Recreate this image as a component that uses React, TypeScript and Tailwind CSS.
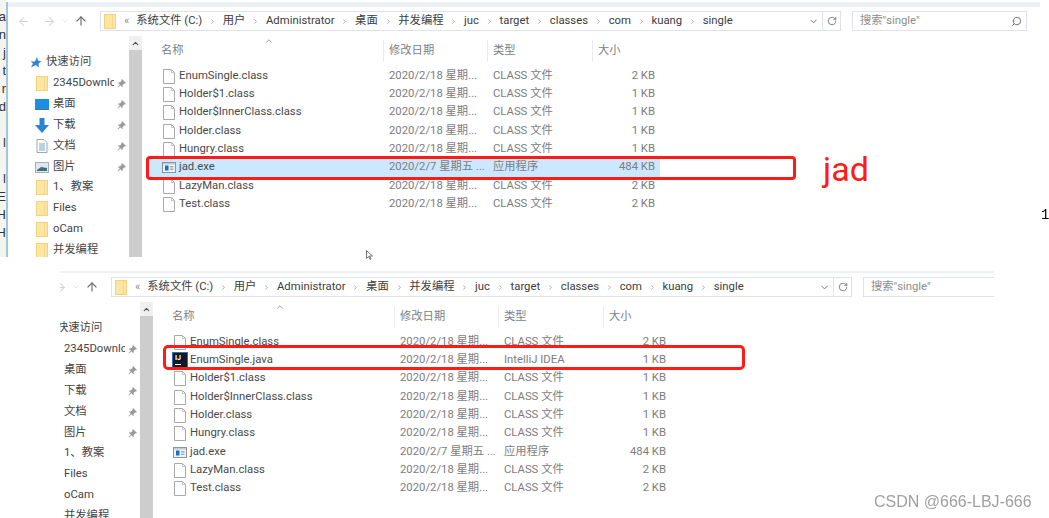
import { ChevronDown, ChevronRight, ChevronUp, ArrowLeft, ArrowRight, ArrowUp, RotateCw, Search } from "lucide-react";

type FileRow = {
  name: string;
  date: string;
  kind: string;
  size: string;
  icon?: "file" | "exe" | "idea";
  selected?: boolean;
};

const D = "2020/2/18 星期...";
const EXE_DATE = "2020/2/7 星期五 ...";
const CLS = "CLASS 文件";

const topFiles: FileRow[] = [
  { name: "EnumSingle.class", date: D, kind: CLS, size: "2 KB" },
  { name: "Holder$1.class", date: D, kind: CLS, size: "1 KB" },
  { name: "Holder$InnerClass.class", date: D, kind: CLS, size: "1 KB" },
  { name: "Holder.class", date: D, kind: CLS, size: "1 KB" },
  { name: "Hungry.class", date: D, kind: CLS, size: "1 KB" },
  { name: "jad.exe", date: EXE_DATE, kind: "应用程序", size: "484 KB", icon: "exe", selected: true },
  { name: "LazyMan.class", date: D, kind: CLS, size: "2 KB" },
  { name: "Test.class", date: D, kind: CLS, size: "2 KB" },
];

const bottomFiles: FileRow[] = [
  { name: "EnumSingle.class", date: D, kind: CLS, size: "2 KB" },
  { name: "EnumSingle.java", date: D, kind: "IntelliJ IDEA", size: "1 KB", icon: "idea" },
  { name: "Holder$1.class", date: D, kind: CLS, size: "1 KB" },
  { name: "Holder$InnerClass.class", date: D, kind: CLS, size: "1 KB" },
  { name: "Holder.class", date: D, kind: CLS, size: "1 KB" },
  { name: "Hungry.class", date: D, kind: CLS, size: "1 KB" },
  { name: "jad.exe", date: EXE_DATE, kind: "应用程序", size: "484 KB", icon: "exe" },
  { name: "LazyMan.class", date: D, kind: CLS, size: "2 KB" },
  { name: "Test.class", date: D, kind: CLS, size: "2 KB" },
];

const crumbs = ["系统文件 (C:)", "用户", "Administrator", "桌面", "并发编程", "juc", "target", "classes", "com", "kuang", "single"];

const navItems: { label: string; icon: string; pin?: boolean }[] = [
  { label: "2345Downlc", icon: "folder", pin: true },
  { label: "桌面", icon: "desktop", pin: true },
  { label: "下载", icon: "download", pin: true },
  { label: "文档", icon: "doc", pin: true },
  { label: "图片", icon: "pics", pin: true },
  { label: "1、教案", icon: "folder" },
  { label: "Files", icon: "folder" },
  { label: "oCam", icon: "folder" },
  { label: "并发编程", icon: "folder" },
];

const edgeLetters = ["a", "n", "j", "t", "r", "d", "", "l", "", "l", "E", "H", "H"];

function FolderIcon() {
  return (
    <svg width="12" height="15" viewBox="0 0 12 15" className="shrink-0">
      <rect x="0.5" y="0.5" width="11" height="14" fill="#fde6a3" stroke="#f3d27a" />
      <path d="M8.500 1v13" stroke="#f6d88a" />
    </svg>
  );
}

function NavIcon({ kind }: { kind: string }) {
  if (kind === "folder") return <FolderIcon />;
  if (kind === "desktop") {
    return (
      <svg width="14" height="11" viewBox="0 0 14 11" className="-ml-[1px] shrink-0">
        <rect width="14" height="10" fill="#1c8fe3" />
        <rect y="10" width="14" height="1" fill="#5d6f80" />
      </svg>
    );
  }
  if (kind === "download") {
    return (
      <svg width="14" height="15" viewBox="0 0 14 15" className="-ml-[1px] shrink-0">
        <path d="M4.500 0h5v7H14l-7 8-7-8h4.500z" fill="#2a83d6" />
      </svg>
    );
  }
  if (kind === "doc") {
    return (
      <svg width="12" height="14" viewBox="0 0 12 14" className="shrink-0">
        <path d="M1 .5h7l3 3v10H1z" fill="#fff" stroke="#9aa5b0" />
        <path d="M3 5h6M3 7h6M3 9h6M3 11h6" stroke="#6fa8d0" />
      </svg>
    );
  }
  return (
    <svg width="14" height="11" viewBox="0 0 14 11" className="-ml-[1px] shrink-0">
      <rect x="0.5" y="0.5" width="13" height="10" fill="#dfe8ef" stroke="#a5adb5" />
      <path d="M2 8l4-3 6 1v3H2z" fill="#3f6d78" />
    </svg>
  );
}

function PinIcon() {
  return (
    <svg width="9" height="9" viewBox="0 0 9 9" className="shrink-0">
      <path d="M5 0l4 4-1 .6-.8-.2L5.600 6l.2 1.400-.8.6L3.300 6.200 1 8.600.5 8l2.300-2.400L1 3.900l.7-.7 1.300.2 1.600-1.600L4.400 1z" fill="#9a9a9a" />
    </svg>
  );
}

function FileIcon({ kind }: { kind?: FileRow["icon"] }) {
  if (kind === "exe") {
    return (
      <svg width="14" height="11" viewBox="0 0 14 11" className="-mx-[1px] shrink-0">
        <rect x="0.5" y="0.5" width="13" height="10" fill="#eef2f6" stroke="#8a949e" />
        <rect x="1" y="1" width="12" height="1.500" fill="#c3ccd4" />
        <rect x="3" y="3.500" width="3.500" height="5" fill="#1a6fc4" />
        <path d="M8 4.500h3.500M8 6h3.500M8 7.500h3.500" stroke="#9fb0c0" />
      </svg>
    );
  }
  if (kind === "idea") {
    return (
      <span className="-mx-[1px] flex h-[14px] w-[14px] shrink-0 flex-col bg-[#0c1a2b] px-[2px] pt-[1px] text-[7px] leading-[8px] font-bold text-white shadow-[0_0_0_1px_#2f6fb0]">
        IJ
        <span className="mt-[2px] h-[1px] w-[6px] bg-white" />
      </span>
    );
  }
  return (
    <svg width="12" height="15" viewBox="0 0 12 15" className="shrink-0">
      <path d="M.5.5h8l3 3v11H.5z" fill="#fff" stroke="#a8a8a8" />
      <path d="M8.500.5v3h3" fill="none" stroke="#c4c4c4" />
    </svg>
  );
}

function Toolbar() {
  return (
    <div className="mt-[4px] flex h-[20px] items-center">
      <div className="flex w-[92px] items-center text-[#d4d7da]">
        <ArrowLeft size={13} className="ml-[9px]" />
        <ArrowRight size={13} className="ml-[13px]" />
        <ChevronDown size={8} className="ml-[5px]" />
        <ArrowUp size={14} className="ml-[5px] text-[#6d6d6d]" />
      </div>
      <div className="flex h-[20px] w-[741px] items-center border border-[#dfe3e7] pl-[3px] text-[11.3px] text-[#3c3c3c]">
        <FolderIcon />
        <span className="ml-[8px] text-[#8a8a8a]">«</span>
        <div className="ml-[7px] flex items-center gap-[6.8px] whitespace-nowrap">
          {crumbs.map((crumb, i) => (
            <div key={crumb} className="flex items-center gap-[6.8px]">
              {i > 0 && <ChevronRight size={7} strokeWidth={2.5} className="text-[#8f8f8f]" />}
              <span>{crumb}</span>
            </div>
          ))}
        </div>
        <ChevronDown size={11} className="ml-auto text-[#6f6f6f]" />
        <div className="ml-[3px] flex h-full w-[18px] items-center justify-center border-l border-[#dfe3e7] text-[#707070]">
          <RotateCw size={10} />
        </div>
      </div>
      <div className="ml-[11px] flex h-[20px] w-[175px] shrink-0 items-center justify-between border border-[#dfe3e7] pr-[4px] pl-[7px] text-[11.3px] text-[#8e8e8e]">
        <span>搜索"single"</span>
        <Search size={11} className="-scale-x-100 text-[#6a6a6a]" />
      </div>
    </div>
  );
}

function Sidebar() {
  return (
    <div className="flex w-[134px] shrink-0">
      <div className="w-[121px] overflow-hidden pt-[16px] text-[11.3px] text-[#444]">
        <div className="flex h-[21px] items-center pl-[22px]">
          <svg width="12" height="11" viewBox="0 0 12 11" className="shrink-0">
            <path d="M7 0l1 3.500 3.500 1-3 2 .4 4-3-2.500L1 10.500l2-4L.5 4.500H5z" fill="#2f83d8" />
          </svg>
          <span className="ml-[4px]">快速访问</span>
        </div>
        {navItems.map((item) => (
          <div key={item.label} className="flex h-[20.9px] items-center pl-[28px]">
            <div className="flex w-[17px] shrink-0">
              <NavIcon kind={item.icon} />
            </div>
            <span className="w-[61px] overflow-hidden whitespace-nowrap">{item.label}</span>
            {item.pin && (
              <span className="ml-[3px]">
                <PinIcon />
              </span>
            )}
          </div>
        ))}
      </div>
      <div className="flex w-[13px] flex-col bg-[#cdcdcd]">
        <div className="flex h-[14px] items-center justify-center bg-[#f0f0f0] text-[#555]">
          <ChevronUp size={9} strokeWidth={3} />
        </div>
      </div>
    </div>
  );
}

function FileList({ files }: { files: FileRow[] }) {
  return (
    <div className="relative min-w-0 flex-1 pl-[7px]">
      <ChevronUp size={10} className="absolute top-0 left-[122px] text-[#8a8a8a]" />
      <div className="grid h-[26px] w-[513px] grid-cols-[234px_104px_105px_70px] pt-[4px] text-[11.3px] text-[#7a7f86]">
        {["名称", "修改日期", "类型", "大小"].map((title, i) => (
          <div
            key={title}
            className={i === 0 ? "flex items-center pl-[12px]" : "flex items-center border-l border-[#ececec] pl-[5px]"}
          >
            {title}
          </div>
        ))}
      </div>
      <div className="mt-[5px]">
        {files.map((file) => (
          <div
            key={file.name}
            className={
              file.selected
                ? "grid h-[18.33px] w-[511px] grid-cols-[240px_104px_104px_58px] items-center bg-[#cce8ff] text-[11.3px] whitespace-nowrap"
                : "grid h-[18.33px] w-[511px] grid-cols-[240px_104px_104px_58px] items-center text-[11.3px] whitespace-nowrap"
            }
          >
            <div className="flex items-center gap-[4px] pl-[14px] text-[#4a4a4a]">
              <FileIcon kind={file.icon} />
              <span>{file.name}</span>
            </div>
            <span className="text-[#7d7d7d]">{file.date}</span>
            <span className="text-[#7d7d7d]">{file.kind}</span>
            <span className="text-right text-[#7d7d7d]">{file.size}</span>
          </div>
        ))}
      </div>
    </div>
  );
}

function ExplorerWindow({ files }: { files: FileRow[] }) {
  return (
    <div className="flex h-full w-[1032px] flex-col bg-white">
      <div className="h-[5px] shrink-0 bg-[#eef1f4]" />
      <Toolbar />
      <div className="mt-[5px] flex min-h-0 flex-1 overflow-hidden">
        <Sidebar />
        <FileList files={files} />
      </div>
    </div>
  );
}

export default function App() {
  return (
    <div className="relative h-[518px] w-[1049px] overflow-hidden bg-white font-['Roboto','Noto_Sans_CJK_SC',sans-serif]">
      <div className="blur-[0.4px]">
        {/* strip of another window left of the first shot */}
        <div className="absolute top-0 left-0 flex h-[257px] w-[6px] flex-col bg-[#f5f5f0] pt-[8px] font-['Liberation_Sans',sans-serif] text-[13px] text-[#333]">
          {edgeLetters.map((letter, i) => (
            <div key={i} className="flex h-[18px] shrink-0 justify-end overflow-hidden leading-[18px]">
              {letter}
            </div>
          ))}
        </div>
        <div className="absolute top-[2px] left-[6px] h-[255px] w-[1034px] border-x-2 border-[#9cc7dc]">
          <ExplorerWindow files={topFiles} />
        </div>
        <div className="absolute top-[271px] left-[60px] h-[247px] w-[934px] overflow-hidden">
          <div className="-mt-[3px] -ml-[41px] h-[250px]">
            <ExplorerWindow files={bottomFiles} />
          </div>
        </div>

        {/* red annotations */}
        <div className="absolute top-[156px] left-[146px] h-[24px] w-[650px] rounded-[4px] border-[3px] border-[#ff1c14]" />
        <div className="absolute top-[345px] left-[163px] h-[25px] w-[582px] rounded-[5px] border-[3px] border-[#ff1c14]" />
        <span className="absolute top-[147px] left-[823px] text-[34px] leading-[45px] text-[#ff1c14]">jad</span>

        <span className="absolute top-[206px] left-[1041px] font-['Liberation_Mono',monospace] text-[14px] leading-[18px] text-black">1</span>
        <svg width="8" height="10" viewBox="0 0 8 10" className="absolute top-[250px] left-[366px]">
          <path d="M.5.5v8l2-2 1.500 3 1-.5-1.500-3H6.500z" fill="#fff" stroke="#555" strokeWidth="0.8" />
        </svg>
      </div>
      <span className="absolute top-[491px] left-[874px] font-['Liberation_Sans',sans-serif] text-[16px] leading-[22px] whitespace-nowrap text-[#a0a0a0]">
        CSDN @666-LBJ-666
      </span>
    </div>
  );
}
